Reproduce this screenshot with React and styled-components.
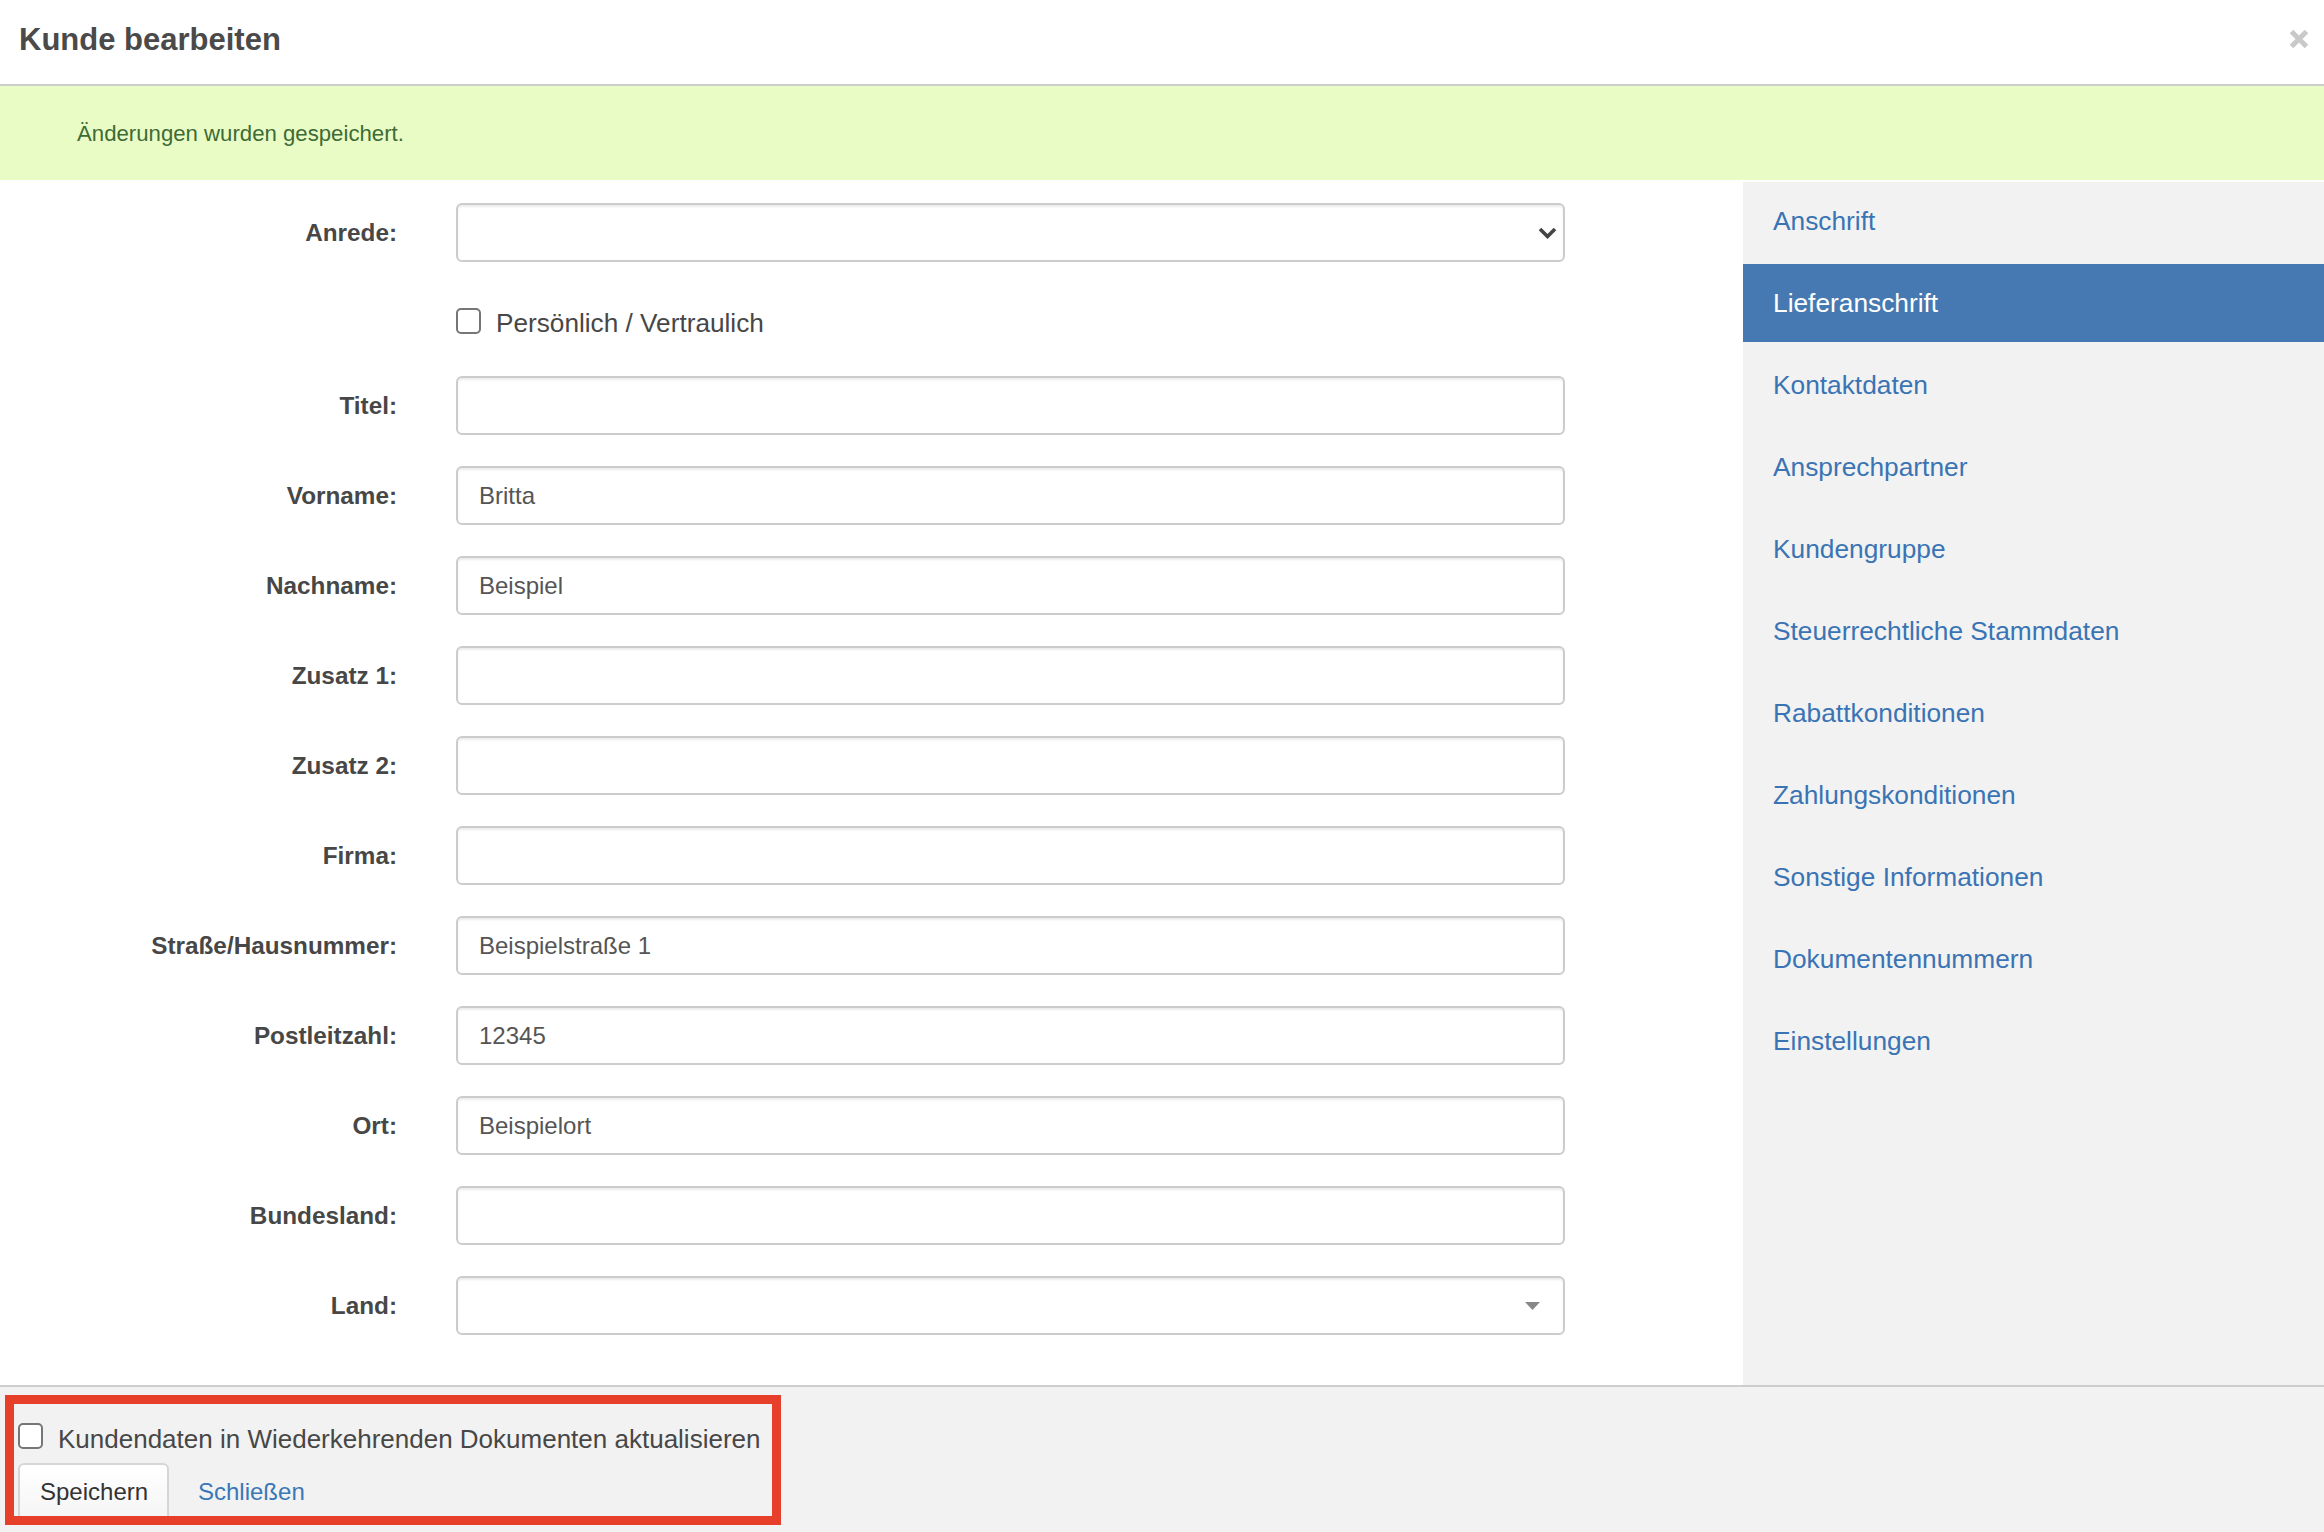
import React from "react";
import styled, { createGlobalStyle } from "styled-components";

const GlobalStyle = createGlobalStyle`
  html, body {
    margin: 0;
    padding: 0;
    background: #fff;
  }
  body {
    font-family: "Liberation Sans", Arial, Helvetica, sans-serif;
    color: #444;
  }
  * {
    box-sizing: border-box;
  }
`;

const fields = [
  { label: "Anrede:", type: "select" },
  { type: "checkbox", text: "Persönlich / Vertraulich" },
  { label: "Titel:", value: "" },
  { label: "Vorname:", value: "Britta" },
  { label: "Nachname:", value: "Beispiel" },
  { label: "Zusatz 1:", value: "" },
  { label: "Zusatz 2:", value: "" },
  { label: "Firma:", value: "" },
  { label: "Straße/Hausnummer:", value: "Beispielstraße 1" },
  { label: "Postleitzahl:", value: "12345" },
  { label: "Ort:", value: "Beispielort" },
  { label: "Bundesland:", value: "" },
  { label: "Land:", type: "select2" },
];

const navItems = [
  "Anschrift",
  "Lieferanschrift",
  "Kontaktdaten",
  "Ansprechpartner",
  "Kundengruppe",
  "Steuerrechtliche Stammdaten",
  "Rabattkonditionen",
  "Zahlungskonditionen",
  "Sonstige Informationen",
  "Dokumentennummern",
  "Einstellungen",
];

export default function App() {
  return (
    <>
      <GlobalStyle />
      <Modal>
        <Header>
          <Title>Kunde bearbeiten</Title>
          <CloseButton aria-label="Schließen">
            <svg width="20" height="20" viewBox="0 0 20 20">
              <path
                d="M2.5 2.5 L17.5 17.5 M17.5 2.5 L2.5 17.5"
                stroke="#c9c9c9"
                strokeWidth="5"
                strokeLinecap="butt"
              />
            </svg>
          </CloseButton>
        </Header>
        <Alert>Änderungen wurden gespeichert.</Alert>
        <Body>
          <FormArea>
            {fields.map((f, i) => {
              if (f.type === "checkbox") {
                return (
                  <CheckRow key={i}>
                    <span />
                    <CheckLabel>
                      <Checkbox type="checkbox" />
                      {f.text}
                    </CheckLabel>
                  </CheckRow>
                );
              }
              return (
                <Row key={i}>
                  <Label>{f.label}</Label>
                  {f.type === "select" && (
                    <SelectWrap>
                      <Select defaultValue="">
                        <option value=""></option>
                      </Select>
                      <SelectIcon>
                        <svg width="19" height="12" viewBox="0 0 19 12">
                          <path
                            d="M2 2 L9.5 9.5 L17 2"
                            fill="none"
                            stroke="#444"
                            strokeWidth="3.6"
                          />
                        </svg>
                      </SelectIcon>
                    </SelectWrap>
                  )}
                  {f.type === "select2" && (
                    <SelectWrap>
                      <Select defaultValue="">
                        <option value=""></option>
                      </Select>
                      <SelectIcon $right={25}>
                        <svg width="15" height="8" viewBox="0 0 15 8">
                          <path d="M0 0 H15 L7.5 8 Z" fill="#888" />
                        </svg>
                      </SelectIcon>
                    </SelectWrap>
                  )}
                  {!f.type && <Input type="text" defaultValue={f.value} />}
                </Row>
              );
            })}
          </FormArea>
          <Sidebar>
            {navItems.map((item) => (
              <NavItem key={item} $active={item === "Lieferanschrift"}>
                {item}
              </NavItem>
            ))}
          </Sidebar>
        </Body>
        <Footer>
          <Highlight>
            <FooterCheck>
              <Checkbox type="checkbox" />
              Kundendaten in Wiederkehrenden Dokumenten aktualisieren
            </FooterCheck>
            <Actions>
              <SaveButton>Speichern</SaveButton>
              <CloseLink href="#">Schließen</CloseLink>
            </Actions>
          </Highlight>
        </Footer>
      </Modal>
    </>
  );
}

const Modal = styled.div`
  width: 2324px;
  height: 1532px;
  display: flex;
  flex-direction: column;
  background: #fff;
  overflow: hidden;
`;

const Header = styled.div`
  height: 86px;
  flex: 0 0 86px;
  display: flex;
  align-items: center;
  justify-content: space-between;
  padding: 0 15px 0 19px;
  border-bottom: 2px solid #cdcdcd;
`;

const Title = styled.h4`
  margin: 0;
  font-size: 31px;
  font-weight: bold;
  color: #4a4a4a;
  line-height: 1;
  padding-bottom: 6px;
`;

const CloseButton = styled.button`
  border: 0;
  background: none;
  padding: 0;
  display: flex;
  align-items: center;
  justify-content: center;
  width: 20px;
  height: 20px;
  margin-bottom: 6px;
  cursor: pointer;
`;

const Alert = styled.div`
  height: 94px;
  flex: 0 0 94px;
  margin-bottom: 2px;
  background: #eafcc6;
  color: #3e6b35;
  font-size: 22.2px;
  display: flex;
  align-items: center;
  padding: 2px 0 0 77px;
`;

const Body = styled.div`
  flex: 0 0 1203px;
  display: flex;
`;

const FormArea = styled.div`
  flex: 0 0 1743px;
  padding-top: 21px;
  background: #fff;
`;

const Row = styled.div`
  display: grid;
  grid-template-columns: 397px 1109px;
  column-gap: 59px;
  align-items: center;
  height: 59px;
  margin-bottom: 31px;
`;

const CheckRow = styled(Row)`
  height: 52px;
  padding-top: 9px;
`;

const Label = styled.label`
  text-align: right;
  font-size: 24.3px;
  font-weight: bold;
  color: #474747;
`;

const inputBase = `
  width: 100%;
  height: 59px;
  border: 2px solid #cccccc;
  border-radius: 6px;
  box-shadow: inset 0 2px 2px rgba(0, 0, 0, 0.075);
  background: #fff;
  font-family: "Liberation Sans", Arial, Helvetica, sans-serif;
  font-size: 24px;
  color: #555;
  padding: 0 21px;
  outline: none;
`;

const Input = styled.input`
  ${inputBase}
`;

const SelectWrap = styled.div`
  position: relative;
  width: 100%;
`;

const Select = styled.select`
  ${inputBase}
  appearance: none;
  -webkit-appearance: none;
  display: block;
`;

const SelectIcon = styled.span`
  position: absolute;
  right: ${(p) => p.$right ?? 8}px;
  top: 50%;
  transform: translateY(-50%);
  display: flex;
  pointer-events: none;
`;

const CheckLabel = styled.label`
  display: flex;
  align-items: center;
  gap: 15px;
  font-size: 26.2px;
  color: #474747;
`;

const Checkbox = styled.input`
  appearance: none;
  -webkit-appearance: none;
  margin: 0;
  width: 25px;
  height: 26px;
  flex: 0 0 25px;
  border: 2px solid #767676;
  border-radius: 5px;
  background: #fff;
  position: relative;
  top: -3px;
`;

const Sidebar = styled.nav`
  flex: 1;
  background: #f2f2f2;
  display: flex;
  flex-direction: column;
  gap: 4px;
`;

const NavItem = styled.a`
  display: flex;
  align-items: center;
  height: 78px;
  padding-left: 30px;
  font-size: 26.3px;
  text-decoration: none;
  color: ${(p) => (p.$active ? "#fff" : "#3a74b4")};
  background: ${(p) => (p.$active ? "#4679b1" : "transparent")};
  cursor: pointer;
`;

const Footer = styled.div`
  flex: 1;
  background: #f2f2f2;
  border-top: 2px solid #cdcdcd;
  padding: 8px 0 0 5px;
`;

const Highlight = styled.div`
  width: 776px;
  height: 130px;
  border: 9px solid #e6402a;
  overflow: hidden;
  padding: 21px 0 0 4px;
`;

const FooterCheck = styled.label`
  display: flex;
  align-items: center;
  gap: 15px;
  font-size: 26px;
  color: #474747;
  height: 28px;
  white-space: nowrap;
`;

const Actions = styled.div`
  display: flex;
  align-items: center;
  margin-top: 10px;
`;

const SaveButton = styled.button`
  height: 62px;
  padding: 0 20px 4px;
  width: 151px;
  border: 2px solid #d6d6d6;
  border-radius: 6px;
  background: linear-gradient(#ffffff, #f4f4f4);
  font-family: "Liberation Sans", Arial, Helvetica, sans-serif;
  font-size: 24px;
  color: #333;
  text-align: left;
  align-self: flex-start;
  cursor: pointer;
`;

const CloseLink = styled.a`
  margin-left: 29px;
  font-size: 24px;
  color: #3a77b9;
  text-decoration: none;
  margin-top: -4px;
`;
